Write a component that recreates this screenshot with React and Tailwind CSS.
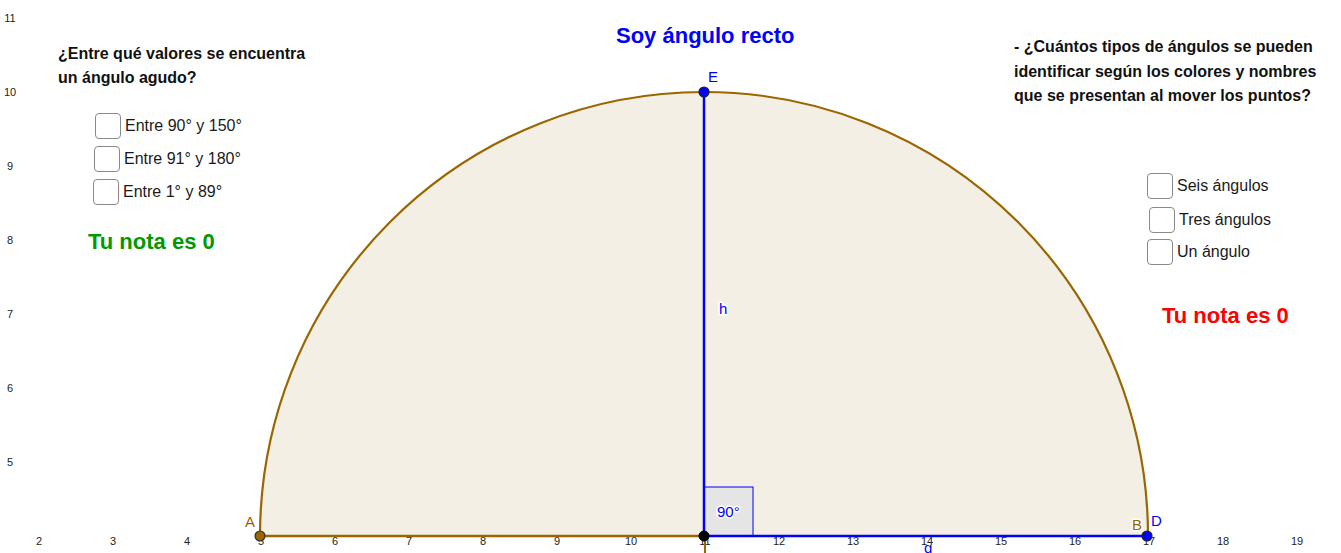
import React from "react";

const font = { fontFamily: '"Liberation Sans", Arial, sans-serif' };

function Check({ label, className = "" }) {
  return (
    <div className={"flex items-center gap-1 " + className}>
      <div className="w-[26px] h-[26px] rounded-[4px] border-[1.5px] border-[#8a8a8a] bg-white shrink-0" />
      <span className="text-[16px] text-[#1a1a1a] leading-none">{label}</span>
    </div>
  );
}

export default function App() {
  const xs = [2, 3, 4, 5, 6, 7, 8, 9, 10, 11, 12, 13, 14, 15, 16, 17, 18, 19];
  const ys = [11, 10, 9, 8, 7, 6, 5];
  const X = (v) => 260 + (v - 5) * 74;
  const Y = (v) => 92 + (10 - v) * 74;
  return (
    <div className="relative w-[1341px] h-[553px] bg-white overflow-hidden" style={font}>
      <svg className="absolute inset-0" width="1341" height="553" style={font}>
        {ys.map((v) => (
          <text key={v} x="10" y={Y(v) + 4} fontSize="11" fill="#222" textAnchor="middle">
            {v}
          </text>
        ))}
        {xs.map((v) => (
          <text key={v} x={X(v) + 1} y="545" fontSize="11" fill="#222" textAnchor="middle">
            {v}
          </text>
        ))}
        <path d="M 260 536 A 444 444 0 0 1 1148 536 Z" fill="#f3efe5" stroke="#996600" strokeWidth="2.2" />
        <line x1="705" y1="538" x2="705" y2="553" stroke="#996600" strokeWidth="2" />
        <rect x="704" y="487" width="49" height="49" fill="#e6e5e6" stroke="#0000ff" strokeWidth="1" />
        <line x1="704" y1="92" x2="704" y2="536" stroke="#0000ff" strokeWidth="2.5" />
        <line x1="704" y1="536" x2="1147" y2="536" stroke="#0000ff" strokeWidth="2.5" />
        <line x1="260" y1="536" x2="704" y2="536" stroke="#996600" strokeWidth="2.5" />
        <text x="717" y="517" fontSize="15" fill="#0000ff" stroke="#fff" strokeWidth="3" paintOrder="stroke">90°</text>
        <text x="719" y="314" fontSize="15" fill="#0000ff" stroke="#fff" strokeWidth="3" paintOrder="stroke">h</text>
        <text x="924" y="553" fontSize="15" fill="#0000ff">g</text>
        <text x="245" y="527" fontSize="15" fill="#996600">A</text>
        <text x="1132" y="530" fontSize="15" fill="#996600" stroke="#fff" strokeWidth="3" paintOrder="stroke">B</text>
        <text x="1151" y="526" fontSize="15" fill="#0000ff">D</text>
        <text x="708" y="82" fontSize="15" fill="#0000ff">E</text>
        <circle cx="260" cy="536" r="5" fill="#996600" stroke="#333" strokeWidth="1.2" />
        <circle cx="704" cy="536" r="5" fill="#000" stroke="#000" strokeWidth="1" />
        <circle cx="1147" cy="536" r="5" fill="#0000ff" stroke="#222" strokeWidth="1.2" />
        <circle cx="704" cy="92" r="5" fill="#0000ff" stroke="#222" strokeWidth="1.2" />
      </svg>

      <div className="absolute left-[58px] top-[42px] text-[16px] font-bold leading-[24px] text-[#111]">
        <div>¿Entre qué valores se encuentra</div>
        <div>un ángulo agudo?</div>
      </div>

      <div className="absolute left-[616px] top-[23px] text-[22px] font-bold leading-[26px] text-[#0000ff]">
        Soy ángulo recto
      </div>

      <div className="absolute left-[1014px] top-[35px] text-[16px] font-bold leading-[24.5px] text-[#111]">
        <div>- ¿Cuántos tipos de ángulos se pueden</div>
        <div>identificar según los colores y nombres</div>
        <div>que se presentan al mover los puntos?</div>
      </div>

      <div className="absolute left-[93px] top-[113px] flex flex-col gap-[7px]">
        <Check label="Entre 90° y 150°" className="ml-[2px]" />
        <Check label="Entre 91° y 180°" className="ml-[1px]" />
        <Check label="Entre 1° y 89°" />
      </div>

      <div className="absolute left-[1147px] top-[173px] flex flex-col gap-[7px]">
        <Check label="Seis ángulos" />
        <Check label="Tres ángulos" className="ml-[2px] mt-[1px]" />
        <Check label="Un ángulo" className="-mt-[1px]" />
      </div>

      <div className="absolute left-[88px] top-[229px] text-[22px] font-bold leading-[26px] text-[#009900]">
        Tu nota es 0
      </div>
      <div className="absolute left-[1162px] top-[303px] text-[22px] font-bold leading-[26px] text-[#ff0000]">
        Tu nota es 0
      </div>
    </div>
  );
}
